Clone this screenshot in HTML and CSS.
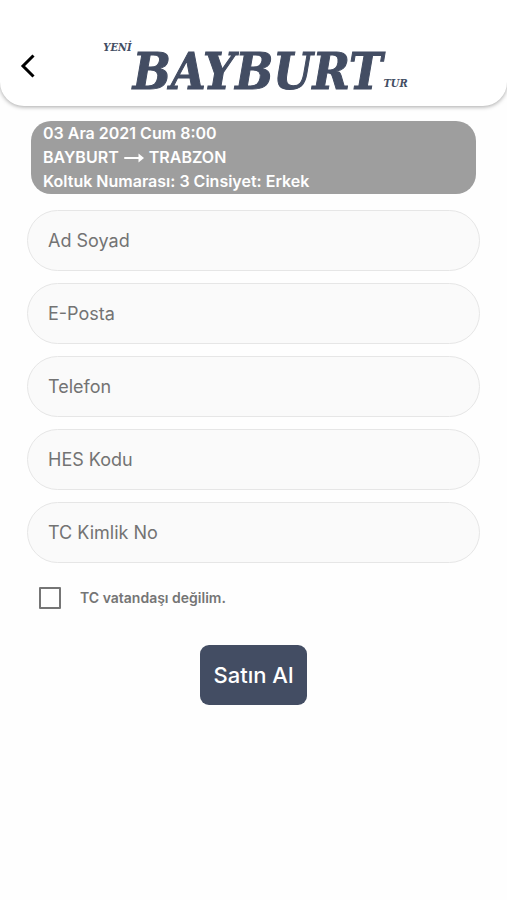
FILE: index.html
```html
<!DOCTYPE html>
<html lang="tr">
<head>
<meta charset="utf-8">
<meta name="viewport" content="width=device-width, initial-scale=1">
<title>Yeni Bayburt Tur</title>
<link rel="stylesheet" href="styles.css">
</head>
<body>
<header class="header">
  <button class="back" type="button" aria-label="Geri">
    <svg width="16" height="24" viewBox="0 0 16 24" fill="none" stroke="#000" stroke-width="3"><path d="M13.500 1.500L3 12L13.500 22.500"/></svg>
  </button>
  <div class="logo">
    <span class="logo-small logo-top">YENİ</span>
    <span class="logo-name">BAYBURT</span>
    <span class="logo-small logo-bottom">TUR</span>
  </div>
</header>
<main class="content">
  <section class="trip">
    <p>03 Ara 2021 Cum 8:00</p>
    <p class="route">BAYBURT
      <svg class="arrow" width="20" height="10" viewBox="0 0 20 10" fill="none" stroke="#fff" stroke-width="2" stroke-linecap="round" role="img" aria-label="→"><path d="M1 5H17"/><path d="M14.500 0.500L20 5L14.500 9.500Z" fill="#fff" stroke="none"/></svg>
      TRABZON</p>
    <p>Koltuk Numarası: 3 Cinsiyet: Erkek</p>
  </section>
  <form class="form">
    <input class="field" type="text" placeholder="Ad Soyad" aria-label="Ad Soyad">
    <input class="field" type="email" placeholder="E-Posta" aria-label="E-Posta">
    <input class="field" type="tel" placeholder="Telefon" aria-label="Telefon">
    <input class="field" type="text" placeholder="HES Kodu" aria-label="HES Kodu">
    <input class="field" type="text" placeholder="TC Kimlik No" aria-label="TC Kimlik No">
    <div class="check">
      <input class="box" type="checkbox" id="foreign">
      <label for="foreign">TC vatandaşı değilim.</label>
    </div>
    <button class="buy" type="button">Satın Al</button>
  </form>
</main>
</body>
</html>
```
FILE: styles.css
```css
* {
  box-sizing: border-box;
}

body {
  margin: 0;
  background: #fefefe;
  font-family: Inter, "Liberation Sans", sans-serif;
}

.header {
  display: grid;
  grid-template-columns: 56px 1fr 52px;
  align-items: center;
  padding: 40px 0 14px;
  background: #fff;
  border-radius: 0 0 24px 24px;
  box-shadow: 0 1px 4px rgba(0, 0, 0, 0.35);
}

.back {
  display: flex;
  justify-content: center;
  padding: 0;
  border: 0;
  background: none;
}

.logo {
  display: flex;
  justify-content: center;
  gap: 1px;
  height: 52px;
  color: #434d63;
  font-family: "DejaVu Serif Condensed", "DejaVu Serif", serif;
  font-weight: bold;
  font-style: italic;
}

.logo-name {
  font-size: 50px;
  line-height: 64px;
  -webkit-text-stroke: 1px #434d63;
}

.logo-small {
  font-size: 11px;
  line-height: 16px;
}

.logo-bottom {
  align-self: flex-end;
}

.content {
  padding: 15px 27px;
}

.trip {
  margin: 0 4px 16px;
  padding: 0 12px 1px;
  border-radius: 20px;
  background: #9e9e9e;
  color: #fff;
  font-size: 16px;
  font-weight: 600;
  line-height: 24px;
}

.trip p {
  margin: 0;
}

.arrow {
  margin: 0 1px;
}

.form {
  display: flex;
  flex-direction: column;
  gap: 12px;
}

.field {
  width: 100%;
  height: 61px;
  padding: 0 20px;
  border: 1px solid #e6e6e6;
  border-radius: 31px;
  background: #fafafa;
  color: #333;
  font-family: inherit;
  font-size: 18px;
}

.field::placeholder {
  color: #737373;
  opacity: 1;
}

.check {
  display: flex;
  align-items: center;
  gap: 19px;
  padding: 12px;
  color: #757575;
  font-size: 14px;
  font-weight: 600;
  line-height: 22px;
}

.box {
  appearance: none;
  width: 22px;
  height: 22px;
  margin: 0;
  border: 2px solid #757575;
  border-radius: 1px;
}

.box:checked {
  background: #757575;
}

.buy {
  align-self: center;
  height: 60px;
  margin-top: 12px;
  padding: 0 14px;
  border: 0;
  border-radius: 9px;
  background: #434d63;
  color: #fff;
  font-family: inherit;
  font-size: 22px;
  font-weight: 500;
}
```
